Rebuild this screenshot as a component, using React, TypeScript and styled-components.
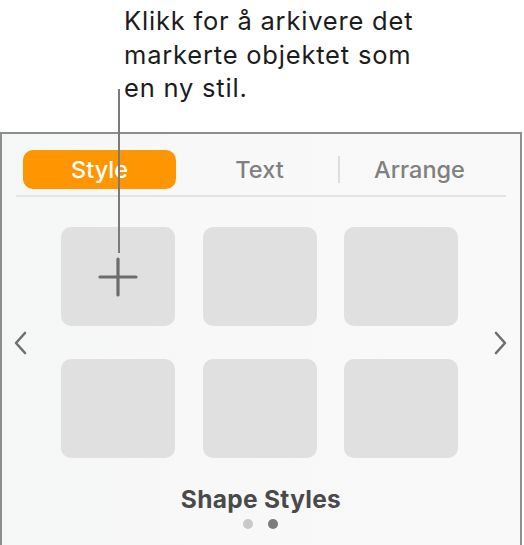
import styled, { createGlobalStyle } from 'styled-components';

const GlobalStyle = createGlobalStyle`
  html, body {
    margin: 0;
    padding: 0;
    background: #ffffff;
  }
  body {
    font-family: Inter, "Noto Sans", "Liberation Sans", sans-serif;
  }
`;

const Page = styled.div`
  position: relative;
  width: 524px;
  height: 545px;
  overflow: hidden;
`;

const Callout = styled.div`
  height: 132px;
  box-sizing: border-box;
  padding: 4px 0 0 124px;
  font-size: 25.5px;
  line-height: 33.5px;
  color: #1c1c1e;
  letter-spacing: 0.8px;
`;

const Leader = styled.div`
  position: absolute;
  left: 118px;
  top: 89px;
  width: 2px;
  height: 164px;
  background: #7a7a7a;
`;

const Panel = styled.div`
  width: 522px;
  height: 413px;
  box-sizing: border-box;
  border: 2px solid #8e8e8e;
  border-bottom: none;
  background: linear-gradient(90deg, #f5f6f6 0%, #f8f8f9 40%, #f9f9f9 100%);
  display: flex;
  flex-direction: column;
  align-items: center;
`;

const TabBar = styled.div`
  width: 490px;
  margin-top: 16px;
  height: 47px;
  box-sizing: border-box;
  border-bottom: 2px solid #e4e4e6;
  display: flex;
  align-items: flex-start;
  padding-left: 7px;
`;

const Tab = styled.div<{ $active?: boolean; $divider?: boolean }>`
  width: 153px;
  height: 39px;
  border-radius: 10px;
  display: flex;
  align-items: center;
  justify-content: center;
  font-size: 23.5px;
  font-weight: 500;
  color: ${({ $active }) => ($active ? '#ffffff' : '#808080')};
  background: ${({ $active }) => ($active ? '#ff9500' : 'transparent')};
  position: relative;

  ${({ $divider }) =>
    $divider &&
    `
    &::before {
      content: '';
      position: absolute;
      left: -5px;
      top: 6px;
      width: 2px;
      height: 27px;
      background: #dedee0;
    }
  `}
`;

const TabSpacer = styled.div<{ $w: number }>`
  width: ${({ $w }) => $w}px;
  flex: none;
`;

const Carousel = styled.div`
  width: 100%;
  margin-top: 30px;
  display: flex;
  align-items: center;
  justify-content: space-between;
  box-sizing: border-box;
  padding: 0 12px 0 11px;
`;

const Chevron = styled.svg`
  width: 16px;
  height: 24px;
  flex: none;
`;

const Grid = styled.div`
  display: grid;
  grid-template-columns: repeat(3, 114px);
  grid-auto-rows: 99px;
  column-gap: 27.5px;
  row-gap: 33px;
  margin-left: -2px;
`;

const Tile = styled.div`
  border-radius: 10px;
  background: #e0e0e1;
  display: flex;
  align-items: center;
  justify-content: center;
`;

const Title = styled.div`
  margin-top: 27px;
  font-size: 24.5px;
  font-weight: 700;
  color: #4a4a4a;
  letter-spacing: 0.3px;
  line-height: 28px;
`;

const Dots = styled.div`
  margin-top: 6px;
  display: flex;
  gap: 15px;
  margin-left: -2px;
`;

const Dot = styled.div<{ $on?: boolean }>`
  width: 10px;
  height: 10px;
  border-radius: 50%;
  background: ${({ $on }) => ($on ? '#7b7b7b' : '#c9c9ca')};
`;

const Plus = () => (
  <svg width="40" height="40" viewBox="0 0 40 40">
    <path d="M20 2 V38 M2 20 H38" stroke="#6d6d6d" strokeWidth="3.2" strokeLinecap="round" />
  </svg>
);

export default function App() {
  return (
    <Page>
      <GlobalStyle />
      <Callout>
        Klikk for å arkivere det
        <br />
        markerte objektet som
        <br />
        en ny stil.
      </Callout>
      <Panel>
        <TabBar>
          <Tab $active>Style</Tab>
          <TabSpacer $w={7} />
          <Tab>Text</Tab>
          <TabSpacer $w={7} />
          <Tab $divider>Arrange</Tab>
        </TabBar>
        <Carousel>
          <Chevron viewBox="0 0 16 24">
            <path d="M12 2 L3 12 L12 22" fill="none" stroke="#6f6f6f" strokeWidth="2.6" strokeLinecap="round" strokeLinejoin="round" />
          </Chevron>
          <Grid>
            <Tile>
              <Plus />
            </Tile>
            <Tile />
            <Tile />
            <Tile />
            <Tile />
            <Tile />
          </Grid>
          <Chevron viewBox="0 0 16 24">
            <path d="M4 2 L13 12 L4 22" fill="none" stroke="#6f6f6f" strokeWidth="2.6" strokeLinecap="round" strokeLinejoin="round" />
          </Chevron>
        </Carousel>
        <Title>Shape Styles</Title>
        <Dots>
          <Dot />
          <Dot $on />
        </Dots>
      </Panel>
      <Leader />
    </Page>
  );
}
